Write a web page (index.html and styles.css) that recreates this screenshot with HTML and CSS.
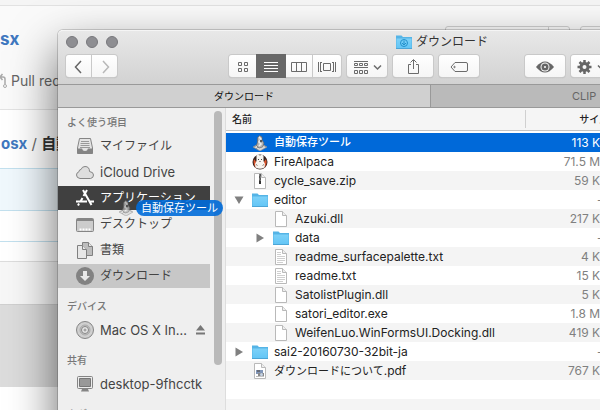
FILE: index.html
```html
<!DOCTYPE html>
<html lang="ja">
<head>
<meta charset="utf-8">
<title>ダウンロード</title>
<link rel="stylesheet" href="styles.css">
</head>
<body>
<svg class="defs" aria-hidden="true">
  <defs>
    <linearGradient id="blue" x1="0" y1="0" x2="0" y2="1"><stop offset="0" stop-color="#7dd1f8"/><stop offset="1" stop-color="#64c6f6"/></linearGradient>
    <symbol id="folder" viewBox="0 0 16 16"><path d="M0 14.5V1.5H5.5L7 3H16V14.5Z" fill="#55b4e6"/><path d="M.5 4.500H15.500V14H.5Z" fill="url(#blue)"/><path d="M0 14.5H16" stroke="#4ca5d6"/></symbol>
    <symbol id="doc" viewBox="0 0 16 16"><path d="M2.5 .5H9.5L13.5 4.5V15.5H2.5Z" fill="#fff" stroke="#b9b9b9"/><path d="M9.5 .5V4.5H13.5" fill="#eee" stroke="#b9b9b9"/></symbol>
    <symbol id="text" viewBox="0 0 16 16"><use href="#doc"/><path d="M4 3.5H8M4 5.5H8M4 7.5H12M4 9.5H12M4 11.5H12M4 13.5H10" stroke="#cfcfcf"/></symbol>
    <symbol id="zip" viewBox="0 0 16 16"><use href="#doc"/><path d="M7 1H9V10H7Z" fill="#555"/><path d="M7 2H8M8 4H9M7 6H8M8 8H9" stroke="#999"/><path d="M7 8H9V11H7Z" fill="#333"/></symbol>
    <symbol id="pdf" viewBox="0 0 16 16"><use href="#doc"/><path d="M4 7H11V11H4Z" fill="#8196b8"/><path d="M5 7H8V9H5Z" fill="#666c78"/><path d="M6 10H12V13.5H6Z" fill="#888"/><circle cx="9.500" cy="11.500" r="1.500" fill="#c5d3e5"/><path d="M4 13.500H7" stroke="#bbb"/></symbol>
    <symbol id="robot" viewBox="0 0 16 16"><path d="M8 8L15 12L8 16L1 12Z" fill="#d8d8d8" stroke="#8b8b8b" stroke-width=".7"/><path d="M2 12L7 9M14 12L10 9M4 14L7 11" stroke="#959595"/><path d="M7.500 .5L10 2V5L12 8L10.500 12L7 13L4.500 10.500L5.500 7V3Z" fill="#b5b5b5" stroke="#666" stroke-width=".7"/><path d="M7 2L9 4L7 7L9 9L7 11" fill="none" stroke="#eee" stroke-width="1.500"/><circle cx="9" cy="6" r="1.200" fill="#555"/></symbol>
    <symbol id="alpaca" viewBox="0 0 16 16"><circle cx="8" cy="8" r="7.500" fill="#34231f"/><path d="M2 5Q.5 10 4 14L5 9ZM14 5Q16 10 12 14L11 9Z" fill="#d8542d"/><path d="M4.500 1.500L6 .5L8 1.500L10 .5L11.500 2L11.500 7L13 10L12.500 13.500Q8 16 3.500 13.500L3 10L4.500 7Z" fill="#f8f5f0"/><path d="M6 5.500H7M9 5.500H10M7.500 7.500H8.500" stroke="#444"/><path d="M4 10L5.500 12M12 10L10.500 12" stroke="#a29389"/></symbol>
    <symbol id="tri-right" viewBox="0 0 10 10"><path d="M1.500 .5L9 5L1.500 9.500Z" fill="#808080"/></symbol>
    <symbol id="tri-down" viewBox="0 0 10 10"><path d="M.5 1.500H9.500L5 9Z" fill="#808080"/></symbol>
  </defs>
</svg>

<main class="page">
  <div class="topbar"></div>
  <header class="repo">
    <div class="repo-head"><a class="repo-name" href="#">sx</a></div>
    <div class="repo-actions"><span class="pill pill-split"></span><span class="pill"></span></div>
    <nav class="repo-nav">
      <svg width="10" height="16" viewBox="0 0 10 16" fill="none" stroke="#aaa" stroke-width="1.500"><path d="M0 4H3Q5 4 5 6V11M2.500 1L0 4L2.500 7"/><circle cx="5" cy="13" r="1.500" stroke-width="1"/></svg>
      <a href="#">Pull requests</a>
    </nav>
  </header>
  <div class="crumb"><a href="#">osx</a> <span>/</span> <b>自動</b></div>
  <div class="notice"></div>
  <div class="rule"></div>
  <div class="spacer"></div>
  <div class="block"></div>
</main>

<section class="window">
  <header class="chrome">
    <div class="titlebar">
      <div class="lights"><button aria-label="閉じる"></button><button aria-label="しまう"></button><button aria-label="拡大"></button></div>
      <h1><svg width="16" height="16" viewBox="0 0 16 16"><use href="#folder"/><circle cx="8" cy="9" r="3.500" fill="none" stroke="#2290cb"/><path d="M8 6.500V11M6 9L8 11L10 9" fill="none" stroke="#2290cb"/></svg>ダウンロード</h1>
    </div>
    <div class="toolbar">
      <div class="group nav">
        <button aria-label="戻る"><svg width="26" height="24" viewBox="0 0 26 24"><path d="M15 6L9.500 12L15 18" fill="none" stroke="#666" stroke-width="1.500"/></svg></button>
        <button aria-label="進む"><svg width="26" height="24" viewBox="0 0 26 24"><path d="M11 6L16.500 12L11 18" fill="none" stroke="#b8b8b8" stroke-width="1.500"/></svg></button>
      </div>
      <div class="group views">
        <button aria-label="アイコン"><svg width="28" height="24" viewBox="0 0 28 24" fill="none" stroke="#6b6b6b"><path d="M9.500 7.500h3v3h-3zM15.500 7.500h3v3h-3zM9.500 13.500h3v3h-3zM15.500 13.500h3v3h-3z"/></svg></button>
        <button class="on" aria-label="リスト"><svg width="28" height="24" viewBox="0 0 28 24" stroke="#fff"><path d="M7 7.500H21M7 10.500H21M7 13.500H21M7 16.500H21"/></svg></button>
        <button aria-label="カラム"><svg width="28" height="24" viewBox="0 0 28 24" fill="none" stroke="#6b6b6b"><path d="M6.500 7.500H21.500V16.500H6.500ZM11.500 7.500V16.500M16.500 7.500V16.500"/></svg></button>
        <button aria-label="Cover Flow"><svg width="28" height="24" viewBox="0 0 28 24" fill="none" stroke="#6b6b6b"><path d="M5.500 7V17M7.500 7V17M20.500 7V17M22.500 7V17M10.500 8.500H17.500V15.500H10.500Z"/><path d="M8 7.500H9M8 16.500H9M19 7.500H20M19 16.500H20"/></svg></button>
      </div>
      <button class="tool" aria-label="グループ"><svg width="40" height="24" viewBox="0 0 40 24" fill="none" stroke="#6b6b6b"><path d="M7 6.500H21M7 12.500H21M7.500 8.500h3v2h-3zM12.500 8.500h3v2h-3zM17.500 8.500h3v2h-3zM7.500 15.500h3v3h-3zM12.500 15.500h3v3h-3zM17.500 15.500h3v3h-3z"/><path d="M27 10.500L30.500 14L34 10.500" stroke-width="1.500"/></svg></button>
      <button class="tool" aria-label="共有"><svg width="40" height="24" viewBox="0 0 40 24" fill="none" stroke="#6b6b6b"><path d="M18 9.500H15.500V18.500H25.500V9.500H23M20.500 14V5M17.500 7.500L20.500 4.500L23.500 7.500"/></svg></button>
      <button class="tool" aria-label="タグ"><svg width="40" height="24" viewBox="0 0 40 24" fill="none" stroke="#6b6b6b"><path d="M16 7.500H27Q28.500 7.500 28.500 9V15Q28.500 16.500 27 16.500H16L12 12Z"/><circle cx="15.500" cy="12" r=".7"/></svg></button>
      <button class="tool look" aria-label="クイックルック"><svg width="40" height="24" viewBox="0 0 40 24"><path d="M11 12Q20 1 29 12Q20 23 11 12Z" fill="#666"/><circle cx="20" cy="12" r="4.500" fill="#f6f6f6"/><circle cx="20" cy="12" r="3.500" fill="#666"/><circle cx="20" cy="12" r="1" fill="#fff"/></svg></button>
      <button class="tool" aria-label="アクション"><svg width="40" height="24" viewBox="0 0 40 24" fill="none" stroke="#666"><circle cx="13.500" cy="12" r="3.500" stroke-width="3"/><path d="M13.500 5V8M13.500 16V19M6.500 12H9.500M17.500 12H20.500M8.500 7L10.500 9M16.500 15L18.500 17M8.500 17L10.500 15M16.500 9L18.500 7" stroke-width="2.500"/><path d="M27 10.500L30.500 14L34 10.500" stroke-width="1.500"/></svg></button>
    </div>
  </header>
  <div class="tabs"><button class="tab active">ダウンロード</button><button class="tab clip">CLIP</button></div>
  <div class="body">
    <aside class="sidebar">
      <nav>
        <h2>よく使う項目</h2>
        <ul>
          <li><a class="ja" href="#"><svg viewBox="0 0 18 18"><path d="M3.500 1.500H14.500L16.500 11V16.500H1.500V11Z" fill="#e4e4e4" stroke="#858585"/><path d="M5 4.500H13M4.500 6.500H13.500M4.500 8.500H13.500M4 10.500H14" stroke="#999"/><path d="M1.500 11.500H6Q6.500 14 9 14Q11.500 14 12 11.500H16.500V16.500H1.500Z" fill="#848484"/></svg>マイファイル</a></li>
          <li><a href="#"><svg viewBox="0 0 18 18"><path d="M4 15.500Q.5 15 .5 12Q.5 9.500 3 8.700Q3 6.500 5 6.500Q6 3.500 9 3.500Q13.500 3.500 13.500 8.500Q17.500 9 17.500 12Q17.500 15 14.500 15.500Z" fill="#dedede" stroke="#858585"/></svg>iCloud Drive</a></li>
          <li class="drop"><a class="ja" href="#"><svg viewBox="0 0 18 18" fill="none" stroke="#fff" stroke-width="2"><path d="M7 1L15.500 16M11 1L7.500 7M6.500 9L4.500 12.500M0 12.500H11M14 12.500H18M3 14.500L2 16.500"/></svg>アプリケーション</a></li>
          <li><a class="ja" href="#"><svg viewBox="0 0 18 18"><rect x=".5" y="3.500" width="17" height="13" rx="1" fill="#ccc" stroke="#858585"/><path d="M1 5H17" stroke="#858585" stroke-width="2"/><path d="M3.500 14.500H14.500" stroke="#fff" stroke-width="2" stroke-dasharray="2 1"/></svg>デスクトップ</a></li>
          <li><a class="ja" href="#"><svg viewBox="0 0 18 18" fill="#e7e7e7" stroke="#808080"><path d="M6.500 1.500H12.500L16.500 5.500V14.500H6.500Z" fill="#bdbdbd"/><path d="M12.500 1.500V5.500H16.500"/><path d="M1.500 4.500H6.500L10.500 8.500V17.500H1.500Z"/><path d="M6.500 4.500V8.500H10.500"/></svg>書類</a></li>
          <li class="current"><a class="ja" href="#"><svg viewBox="0 0 18 18"><circle cx="9" cy="9" r="9" fill="#828282"/><path d="M7 4H11V9H14L9 14L4 9H7Z" fill="#e9e9e9"/></svg>ダウンロード</a></li>
        </ul>
        <h2>デバイス</h2>
        <ul>
          <li><a href="#"><svg viewBox="0 0 18 18" stroke="#858585"><circle cx="9" cy="9" r="8.500" fill="#cfcfcf"/><circle cx="9" cy="9" r="5" fill="#c2c2c2" stroke="#aaa"/><circle cx="9" cy="9" r="3.500" fill="#e8e8e8"/><circle cx="9" cy="9" r="1" fill="#fff"/></svg><span>Mac OS X In…</span><svg class="eject" viewBox="0 0 9 10"><path d="M4.500 0L9 5.500H0ZM0 7.500H9V9.500H0Z" fill="#777"/></svg></a></li>
        </ul>
        <h2>共有</h2>
        <ul>
          <li><a href="#"><svg viewBox="0 0 18 18"><rect x="1.500" y="1.500" width="15" height="12" rx="1" fill="#ececec" stroke="#858585"/><path d="M3.500 3.500H14.500V11.500H3.500Z" fill="#999" stroke="#777"/><path d="M6 14H12L13 16.500H5Z" fill="#858585"/></svg>desktop-9fhcctk</a></li>
        </ul>
        <h2>タグ</h2>
      </nav>
      <div class="scroll"><div class="thumb"></div></div>
      <div class="drag"><svg width="16" height="16"><use href="#robot"/></svg><span>自動保存ツール</span></div>
    </aside>
    <div class="list">
      <table>
        <thead><tr><th class="name">名前</th><th class="size">サイズ</th><th class="rest"></th></tr></thead>
        <tbody>
          <tr class="selected"><td><div class="file"><i></i><svg class="icon"><use href="#robot"/></svg><span class="ja">自動保存ツール</span></div></td><td>113 KB</td><td></td></tr>
          <tr><td><div class="file"><i></i><svg class="icon"><use href="#alpaca"/></svg>FireAlpaca</div></td><td>71.5 MB</td><td></td></tr>
          <tr><td><div class="file"><i></i><svg class="icon"><use href="#zip"/></svg>cycle_save.zip</div></td><td>59 KB</td><td></td></tr>
          <tr><td><div class="file"><i><svg><use href="#tri-down"/></svg></i><svg class="icon"><use href="#folder"/></svg>editor</div></td><td>--</td><td></td></tr>
          <tr><td><div class="file sub"><i></i><svg class="icon"><use href="#doc"/></svg>Azuki.dll</div></td><td>217 KB</td><td></td></tr>
          <tr><td><div class="file sub"><i><svg><use href="#tri-right"/></svg></i><svg class="icon"><use href="#folder"/></svg>data</div></td><td>--</td><td></td></tr>
          <tr><td><div class="file sub"><i></i><svg class="icon"><use href="#text"/></svg>readme_surfacepalette.txt</div></td><td>4 KB</td><td></td></tr>
          <tr><td><div class="file sub"><i></i><svg class="icon"><use href="#text"/></svg>readme.txt</div></td><td>15 KB</td><td></td></tr>
          <tr><td><div class="file sub"><i></i><svg class="icon"><use href="#doc"/></svg>SatolistPlugin.dll</div></td><td>5 KB</td><td></td></tr>
          <tr><td><div class="file sub"><i></i><svg class="icon"><use href="#doc"/></svg>satori_editor.exe</div></td><td>1.8 MB</td><td></td></tr>
          <tr><td><div class="file sub"><i></i><svg class="icon"><use href="#doc"/></svg>WeifenLuo.WinFormsUI.Docking.dll</div></td><td>419 KB</td><td></td></tr>
          <tr><td><div class="file"><i><svg><use href="#tri-right"/></svg></i><svg class="icon"><use href="#folder"/></svg>sai2-20160730-32bit-ja</div></td><td>--</td><td></td></tr>
          <tr><td><div class="file"><i></i><svg class="icon"><use href="#pdf"/></svg><span><span class="ja">ダウンロードについて</span>.pdf</span></div></td><td>767 KB</td><td></td></tr>
          <tr><td></td><td></td><td></td></tr>
          <tr><td></td><td></td><td></td></tr>
        </tbody>
      </table>
    </div>
  </div>
</section>
</body>
</html>
```
FILE: styles.css
```css
* { box-sizing: border-box; }
body {
  margin: 0;
  height: 100vh;
  overflow: hidden;
  position: relative;
  background: #fff;
  color: #222;
  font: 12px/16px Inter, "Noto Sans CJK JP", sans-serif;
}
button { margin: 0; padding: 0; border: 0; background: none; font: inherit; color: inherit; }
a { color: inherit; text-decoration: none; }
h1, h2, ul { margin: 0; padding: 0; font-weight: 400; list-style: none; }
svg { display: block; flex: none; }
.defs { position: absolute; width: 0; height: 0; }

/* Page behind the window */
.topbar { height: 6px; background: #f5f5f5; border-bottom: 1px solid #e2e2e2; }
.repo { height: 104px; display: flex; flex-wrap: wrap; justify-content: space-between; background: #fafafa; border-bottom: 1px solid #e3e3e3; }
.repo-head { padding-top: 21px; }
.repo-name { font-size: 17px; line-height: 24px; font-weight: 700; color: #4078c0; }
.repo-actions { display: flex; gap: 10px; padding-top: 20px; margin-right: -40px; }
.pill { width: 60px; height: 26px; border: 1px solid #d0d0d0; border-radius: 3px; }
.pill-split { width: 125px; background: linear-gradient(#d0d0d0, #d0d0d0) 102px 0 / 1px 100% no-repeat; }
.repo-nav { width: 100%; height: 37px; display: flex; align-items: center; gap: 1px; font-size: 14px; color: #666; }
.crumb { padding: 24px 0 0 1px; font-size: 15px; line-height: 20px; color: #666; white-space: nowrap; }
.crumb a { font-weight: 700; color: #4078c0; }
.crumb b { color: #333; }
.notice { height: 43px; margin-top: 14px; background: #f0f8fd; border: 1px solid #c2e0ee; border-width: 1px 0; }
.rule { height: 31px; border-bottom: 1px solid #c2e0ee; }
.spacer { height: 43px; margin-top: 19px; border-top: 1px solid #ddd; background: #f7f7f7; }
.block { height: 83px; background: #dcdcdc; border-top: 1px solid #d0d0d0; }

/* Window */
.window {
  position: absolute;
  top: 30px;
  bottom: -60px;
  left: 58px;
  right: -226px;
  display: flex;
  flex-direction: column;
  border-radius: 5px 5px 0 0;
  background: #fff;
  box-shadow: 0 0 0 1px rgba(0, 0, 0, .16), 0 20px 48px rgba(0, 0, 0, .6);
}
.chrome { height: 54px; flex: none; border-radius: 5px 5px 0 0; background: linear-gradient(#e8e8e8, #d2d2d2); border-top: 1px solid #f5f5f5; }
.titlebar { height: 21px; margin-bottom: 3px; display: grid; grid-template-columns: 1fr auto 1fr; align-items: center; padding: 0 8px; }
.lights { display: flex; gap: 8px; }
.lights button { width: 12px; height: 12px; border-radius: 50%; background: #8e8e92; border: 1px solid #78787c; }
h1 { display: flex; align-items: center; gap: 4px; font-size: 12px; color: #333; }
.toolbar { display: flex; gap: 6px; padding-left: 8px; }
.group { display: flex; }
.group button, .tool { height: 22px; display: grid; place-items: center; background: linear-gradient(#fff, #f5f5f5); box-shadow: 0 0 0 1px #c9c9c9, 0 1px 1px #aaa; }
.tool { width: 40px; border-radius: 3px; }
.group button:first-child { border-radius: 3px 0 0 3px; }
.group button:last-child { border-radius: 0 3px 3px 0; }
.nav button { width: 25px; }
.nav { gap: 1px; }
.views { margin-left: 106px; }
.group .on { background: #686868; box-shadow: 0 0 0 1px #686868; z-index: 1; }
.look { margin-left: 40px; }
.tabs { height: 24px; flex: none; display: flex; border: 1px solid #999; border-width: 1px 0; }
.tab { flex: 1; font-size: 10px; background: #bababa; color: #666; }
.tab.active { flex: 0 0 373px; background: #d0d0d0; color: #111; border-right: 1px solid #999; }
.clip { text-align: left; padding-left: 141px; font-size: 11px; }
.body { flex: 1; display: flex; min-height: 0; }

/* Sidebar */
.sidebar { position: relative; flex: 0 0 168px; display: flex; background: #efefef; border-right: 1px solid #ddd; }
.sidebar nav { width: 152px; height: 100%; overflow: hidden; padding-top: 5px; }
h2 { padding-left: 9px; font-size: 10px; line-height: 18px; color: #777; font-weight: 500; }
.sidebar ul { padding-top: 3px; margin-bottom: 9px; }
.sidebar li { height: 24px; margin-bottom: 2px; }
.sidebar a { height: 24px; display: flex; align-items: center; gap: 6px; padding-left: 18px; font-size: 13px; color: #444; white-space: nowrap; }
.sidebar a.ja { font-size: 12px; }
.sidebar a > svg { width: 18px; height: 18px; }
.sidebar a > .eject { width: 9px; height: 10px; margin: 0 5px 0 auto; }
.sidebar .drop { background: #404040; }
.sidebar .drop a { color: #fff; }
.sidebar .current { background: #c7c7c7; }
.scroll { padding: 3px 0 0 4px; }
.thumb { width: 8px; height: 254px; border-radius: 4px; background: #b9b9b9; }
.drag { position: absolute; top: 92px; left: 60px; display: flex; gap: 2px; align-items: center; font-size: 11px; color: #fff; white-space: nowrap; }
.drag svg { opacity: .7; }
.drag span { padding: 0 5px; border-radius: 8px; background: rgba(0, 108, 217, .9); }

/* File list */
.list { flex: 1; min-width: 0; background: #fff; }
table { width: 100%; table-layout: fixed; border-collapse: separate; border-spacing: 0; }
th, td { padding: 0; white-space: nowrap; }
th { height: 23px; font-size: 10px; font-weight: 500; line-height: 16px; text-align: left; background: #f5f5f5; border-bottom: 1px solid #c4c4c4; color: #222; }
.name { width: 300px; padding-left: 6px; background: linear-gradient(#d0d0d0, #d0d0d0) right 2px / 1px 18px no-repeat #f5f5f5; }
.size { width: 88px; padding-right: 5px; text-align: right; }
tbody::before { content: ""; display: block; height: 2px; }
td { height: 19px; line-height: 19px; }
td:nth-child(2) { text-align: right; padding-right: 6px; color: #808080; }
tbody tr:nth-child(odd) { background: #f4f4f4; }
tbody tr.selected { background: #0069d9; color: #fff; }
.selected td:nth-child(2) { color: #fff; }
.file { height: 19px; display: flex; align-items: center; padding-left: 8px; }
.file.sub { padding-left: 29px; }
.file i { width: 10px; margin-right: 8px; }
.file i svg { width: 10px; height: 10px; }
.icon { width: 16px; height: 16px; margin-right: 6px; }
.list .ja { font-size: 11px; }
.selected .ja { font-weight: 500; }
```
